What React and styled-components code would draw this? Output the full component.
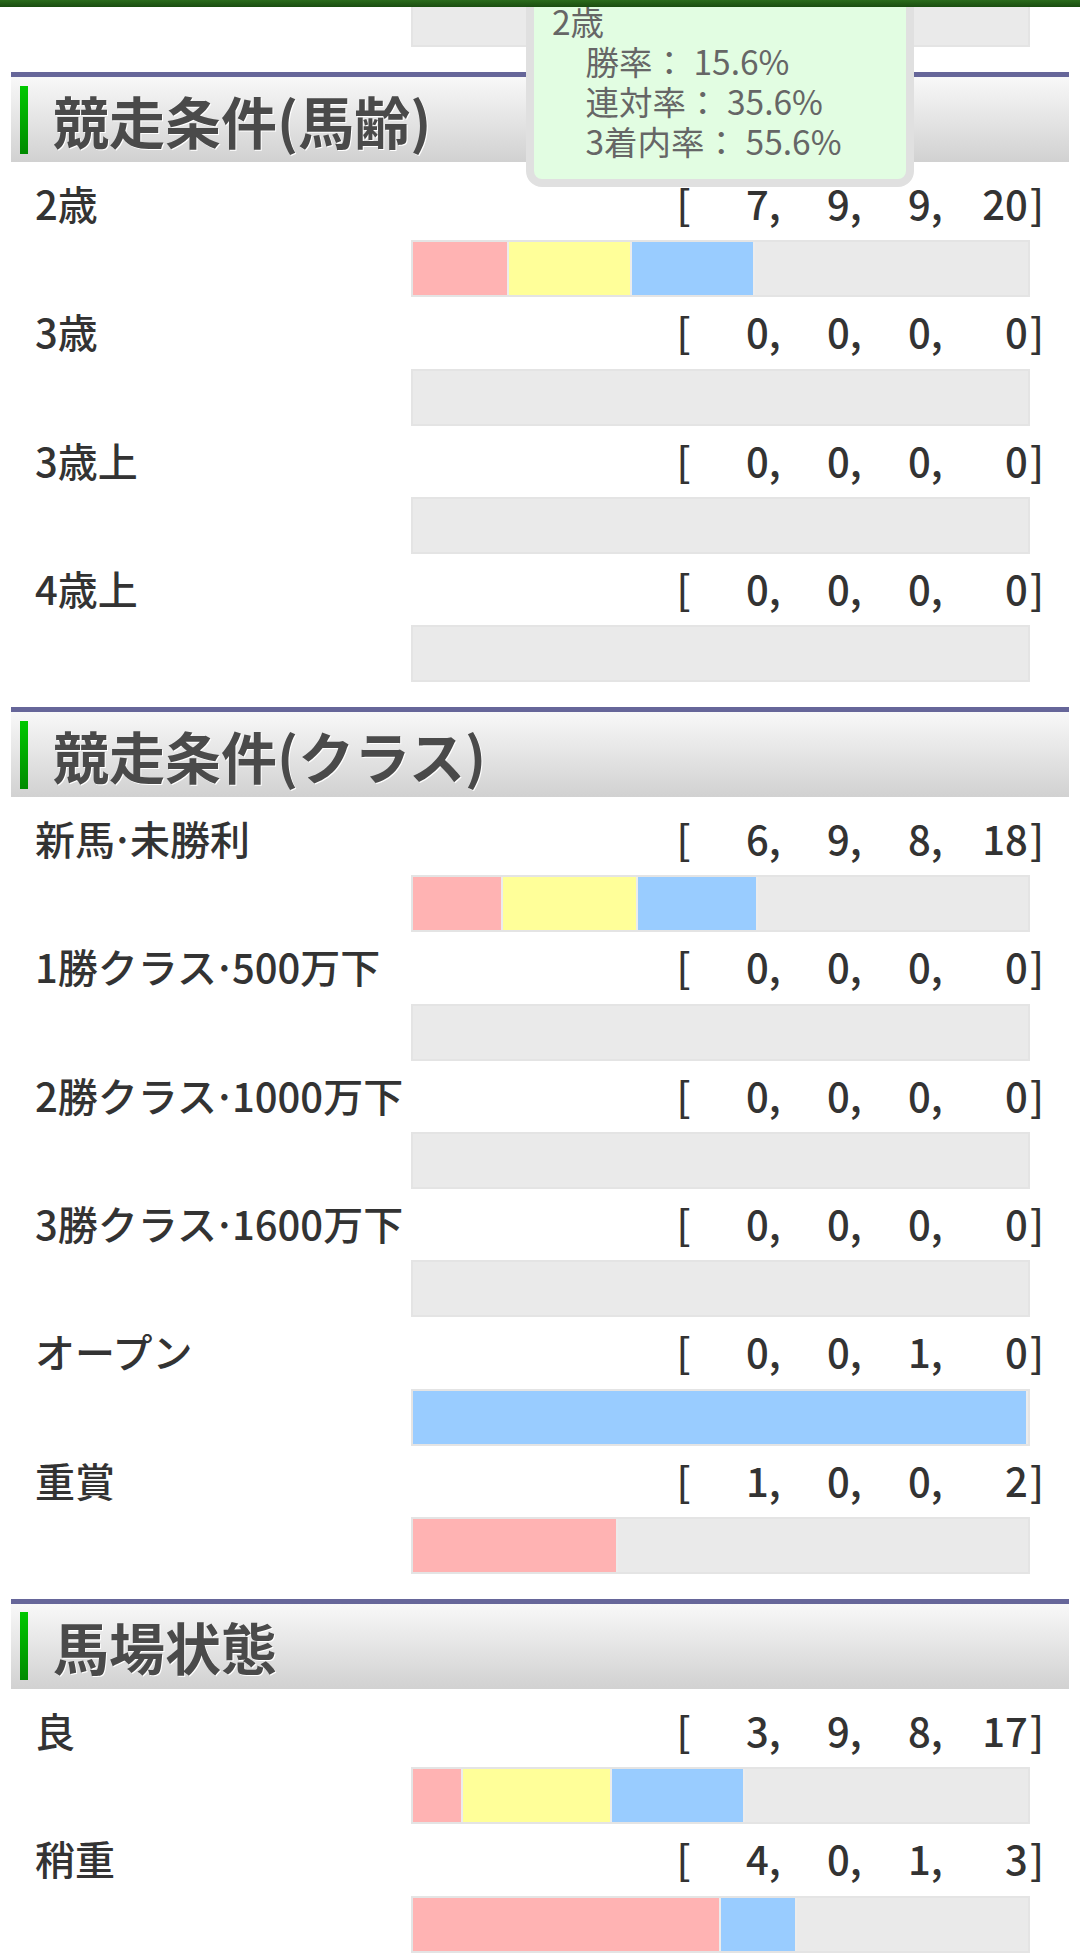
import React from "react";
import styled, { createGlobalStyle } from "styled-components";

const GlobalStyle = createGlobalStyle`
  html, body { margin: 0; padding: 0; background: #fff; }
  body { font-family: "Noto Sans CJK JP", "Noto Sans", sans-serif; }
`;

const Page = styled.div`
  position: relative;
  width: 1080px;
  height: 1953px;
  overflow: hidden;
  background: #fff;
`;

const TopBar = styled.div`
  position: relative;
  z-index: 3;
  height: 7px;
  background: linear-gradient(#2b6b1c, #1a4d10);
`;

const Content = styled.div`
  padding: 0 11px;
`;

const Bar = styled.div`
  display: flex;
  box-sizing: border-box;
  height: ${(p) => p.$h || 57}px;
  margin: 0 39px 0 400px;
  background: #eaeaea;
  border: 2px solid #e4e4e4;
  ${(p) => (p.$cut ? "border-top: 0;" : "")}
  overflow: hidden;
`;

const Segment = styled.div`
  flex: none;
  box-sizing: border-box;
  height: 100%;
  background: ${(p) => p.$color};
  border-right: 2px solid #ececec;
`;

const Section = styled.section`
  margin-top: 25px;
`;

const SectionHeader = styled.h2`
  display: flex;
  align-items: center;
  box-sizing: border-box;
  height: 90px;
  margin: 0 0 7px;
  border-top: 5px solid #666699;
  background: linear-gradient(#f8f8f8, #d1d1d1);
  font-size: 56px;
  font-weight: 700;
  line-height: 1;
  color: #4a4a4a;
  text-shadow: 1px 1px 0 #fff;
`;

const Mark = styled.span`
  flex: none;
  width: 8px;
  height: 68px;
  margin: 0 25px 0 9px;
  background: linear-gradient(#00c800, #008a00);
`;

const Row = styled.div``;

const LabelLine = styled.div`
  display: flex;
  justify-content: space-between;
  align-items: flex-start;
  box-sizing: border-box;
  height: 71.3px;
  padding: 14px 25px 0 24px;
  font-size: 40px;
  line-height: 40px;
  font-weight: 500;
  color: #333;
  white-space: nowrap;
`;

const Dot = styled.span`
  margin: 0 -4px;
`;

const Counts = styled.div`
  display: flex;
`;

const Bracket = styled.span`
  display: inline-block;
  padding-left: ${(p) => (p.$close ? "2px" : "0")};
`;

const Count = styled.span`
  display: inline-block;
  width: ${(p) => p.$w}px;
  text-align: right;
`;

const Tooltip = styled.div`
  position: absolute;
  z-index: 2;
  left: 526px;
  top: -15px;
  width: 388px;
  box-sizing: border-box;
  border: 8px solid #e0e0e0;
  border-radius: 16px;
  background: #e2fde2;
  padding: 8px 18px 18px;
  font-size: 33.5px;
  line-height: 40px;
  color: #666;
  white-space: nowrap;
`;

const TipLine = styled.div`
  padding-left: ${(p) => (p.$indent ? "1em" : "0")};
`;

const COLORS = ["#ffb3b3", "#ffff99", "#99ccff"];

const sections = [
  {
    title: "競走条件(馬齢)",
    rows: [
      [["2歳"], [7, 9, 9, 20]],
      [["3歳"], [0, 0, 0, 0]],
      [["3歳上"], [0, 0, 0, 0]],
      [["4歳上"], [0, 0, 0, 0]],
    ],
  },
  {
    title: "競走条件(クラス)",
    rows: [
      [["新馬", "未勝利"], [6, 9, 8, 18]],
      [["1勝クラス", "500万下"], [0, 0, 0, 0]],
      [["2勝クラス", "1000万下"], [0, 0, 0, 0]],
      [["3勝クラス", "1600万下"], [0, 0, 0, 0]],
      [["オープン"], [0, 0, 1, 0]],
      [["重賞"], [1, 0, 0, 2]],
    ],
  },
  {
    title: "馬場状態",
    rows: [
      [["良"], [3, 9, 8, 17]],
      [["稍重"], [4, 0, 1, 3]],
    ],
  },
];

const WIDTHS = [90, 81, 81, 85];

function StatBar({ counts }) {
  const total = counts.reduce((a, b) => a + b, 0);
  return (
    <Bar>
      {total > 0 &&
        counts.slice(0, 3).map((c, i) =>
          c > 0 ? (
            <Segment
              key={i}
              $color={COLORS[i]}
              style={{ width: `${(c / total) * 100}%` }}
            />
          ) : null
        )}
    </Bar>
  );
}

function StatRow({ parts, counts }) {
  return (
    <Row>
      <LabelLine>
        <span>
          {parts[0]}
          {parts[1] && (
            <>
              <Dot>·</Dot>
              {parts[1]}
            </>
          )}
        </span>
        <Counts>
          <Bracket>[</Bracket>
          {counts.map((c, i) => (
            <Count key={i} $w={WIDTHS[i]}>
              {c}
              {i < 3 ? "," : ""}
            </Count>
          ))}
          <Bracket $close>]</Bracket>
        </Counts>
      </LabelLine>
      <StatBar counts={counts} />
    </Row>
  );
}

export default function App() {
  return (
    <Page>
      <GlobalStyle />
      <TopBar />
      <Tooltip>
        <TipLine>2歳</TipLine>
        <TipLine $indent>勝率： 15.6%</TipLine>
        <TipLine $indent>連対率： 35.6%</TipLine>
        <TipLine $indent>3着内率： 55.6%</TipLine>
      </Tooltip>
      <Content>
        <Bar $h={40} $cut />
        {sections.map((s) => (
          <Section key={s.title}>
            <SectionHeader>
              <Mark />
              {s.title}
            </SectionHeader>
            {s.rows.map(([parts, counts]) => (
              <StatRow key={parts.join("")} parts={parts} counts={counts} />
            ))}
          </Section>
        ))}
      </Content>
    </Page>
  );
}
